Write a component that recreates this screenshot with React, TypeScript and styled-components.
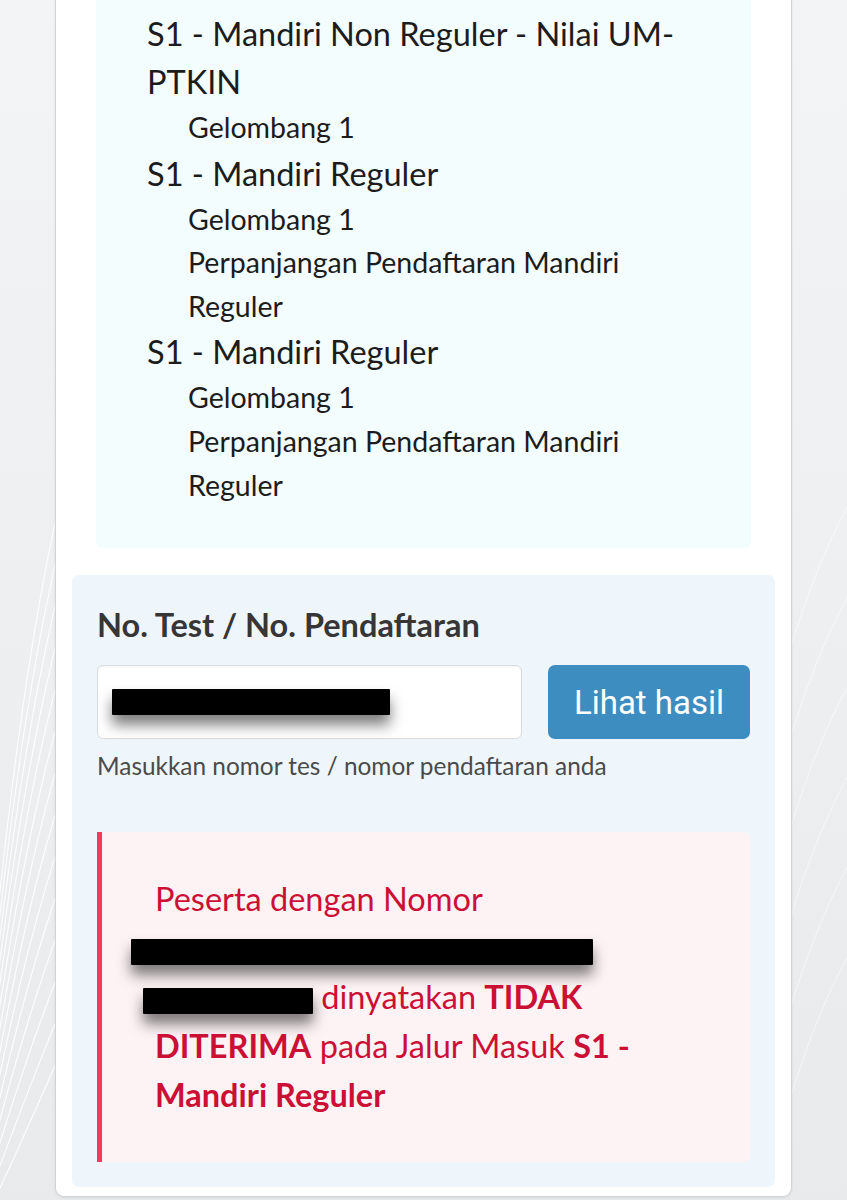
import React from 'react'
import styled, { createGlobalStyle } from 'styled-components'

const GlobalStyle = createGlobalStyle`
  html, body {
    margin: 0;
    padding: 0;
    background: #eff0f2;
    font-family: Lato, "Open Sans", sans-serif;
  }
`

const Backdrop = styled.svg`
  position: fixed;
  inset: 0;
  width: 100%;
  height: 100%;
  z-index: 0;
  pointer-events: none;
`

const Page = styled.div`
  position: relative;
  z-index: 1;
  display: flex;
  justify-content: flex-start;
  padding-left: 55px;
  min-height: 1200px;
  box-sizing: border-box;
`

const Card = styled.div`
  width: 737px;
  height: 1197px;
  box-sizing: border-box;
  background: #ffffff;
  border: 1px solid #d2d3d5;
  border-top: none;
  border-radius: 0 0 9px 9px;
  box-shadow: 0 1px 3px rgba(0, 0, 0, 0.08);
  padding: 0 16px 9px 16px;
  display: flex;
  flex-direction: column;
  justify-content: space-between;
`

const ProgramPanel = styled.div`
  margin: 0 24px 0 24px;
  background: #f4fdfe;
  border-radius: 0 0 6px 6px;
  padding: 10px 40px 41px 51px;
`

const ProgramTitle = styled.div`
  font-size: 32.5px;
  line-height: 48px;
  color: #1c1c1c;
`

const WaveList = styled.div`
  padding-left: 41px;
`

const WaveItem = styled.div`
  font-size: 28.5px;
  line-height: 43.6px;
  color: #1c1c1c;
`

const SearchPanel = styled.div`
  background: #eef6fc;
  border-radius: 7px;
  padding: 30px 25px 25px 25px;
  display: flex;
  flex-direction: column;
`

const Label = styled.div`
  font-size: 32.5px;
  font-weight: 700;
  line-height: 40px;
  color: #363636;
  margin-bottom: 20px;
`

const InputRow = styled.div`
  display: flex;
  gap: 26px;
  height: 74px;
`

const Field = styled.div`
  width: 425px;
  box-sizing: border-box;
  background: #ffffff;
  border: 1px solid #dbdbdb;
  border-radius: 6px;
  display: flex;
  align-items: center;
  padding-left: 14px;
  box-shadow: inset 0 1px 2px rgba(10, 10, 10, 0.05);
`

const Redact = styled.span<{ $w: number; $shift?: number }>`
  display: inline-block;
  width: ${p => p.$w}px;
  height: 26px;
  background: #000;
  vertical-align: middle;
  margin-left: ${p => -(p.$shift || 0)}px;
  box-shadow: 0 10px 14px rgba(0, 0, 0, 0.5);
  border-radius: 1px;
`

const Button = styled.button`
  flex: 1;
  border: none;
  border-radius: 7px;
  background: #3d8dc1;
  color: #ffffff;
  font-family: Roboto, Lato, sans-serif;
  font-size: 33px;
  cursor: pointer;
`

const Help = styled.div`
  margin-top: 12px;
  font-size: 24.4px;
  line-height: 30px;
  color: #4a4a4a;
`

const Alert = styled.div`
  margin-top: 51px;
  background: #fdf3f5;
  border-left: 5px solid #f9375f;
  border-radius: 0 6px 6px 0;
  padding: 42px 60px 43px 53px;
  color: #cc0f35;
  font-size: 32.5px;
  line-height: 49px;
  strong {
    font-weight: 700;
  }
`

const programs = [
  { title: 'S1 - Mandiri Non Reguler - Nilai UM-PTKIN', waves: ['Gelombang 1'] },
  { title: 'S1 - Mandiri Reguler', waves: ['Gelombang 1', 'Perpanjangan Pendaftaran Mandiri Reguler'] },
  { title: 'S1 - Mandiri Reguler', waves: ['Gelombang 1', 'Perpanjangan Pendaftaran Mandiri Reguler'] },
]

const Lines = () => (
  <Backdrop viewBox="0 0 847 1200" preserveAspectRatio="none">
    <defs>
      <linearGradient id="bg" x1="0" y1="0" x2="0" y2="1">
        <stop offset="0" stopColor="#f3f4f5" />
        <stop offset="1" stopColor="#e9eaec" />
      </linearGradient>
    </defs>
    <rect width="847" height="1200" fill="url(#bg)" />
    {Array.from({ length: 14 }).map((_, i) => (
      <path
        key={i}
        d={`M -20 ${1230 - i * 10} C 20 ${1150 - i * 40}, 60 ${1050 - i * 45}, 130 ${900 - i * 50}`}
        stroke="#ffffff"
        strokeWidth="1.2"
        fill="none"
        opacity="0.85"
      />
    ))}
    {Array.from({ length: 6 }).map((_, i) => (
      <path
        key={'r' + i}
        d={`M 790 ${1100 - i * 90} C 820 ${1000 - i * 90}, 850 ${950 - i * 90}, 880 ${900 - i * 90}`}
        stroke="#ffffff"
        strokeWidth="1"
        fill="none"
        opacity="0.5"
      />
    ))}
  </Backdrop>
)

export default function App() {
  return (
    <>
      <GlobalStyle />
      <Lines />
      <Page>
        <Card>
          <ProgramPanel>
            {programs.map((prog, i) => (
              <div key={i}>
                <ProgramTitle>{prog.title}</ProgramTitle>
                <WaveList>
                  {prog.waves.map(w => (
                    <WaveItem key={w}>{w}</WaveItem>
                  ))}
                </WaveList>
              </div>
            ))}
          </ProgramPanel>
          <SearchPanel>
            <Label>No. Test / No. Pendaftaran</Label>
            <InputRow>
              <Field>
                <Redact $w={278} />
              </Field>
              <Button>Lihat hasil</Button>
            </InputRow>
            <Help>Masukkan nomor tes / nomor pendaftaran anda</Help>
            <Alert>
              Peserta dengan Nomor <Redact $w={462} $shift={24} /> <Redact $w={170} $shift={12} /> dinyatakan{' '}
              <strong>TIDAK DITERIMA</strong> pada Jalur Masuk <strong>S1 - Mandiri Reguler</strong>
            </Alert>
          </SearchPanel>
        </Card>
      </Page>
    </>
  )
}
